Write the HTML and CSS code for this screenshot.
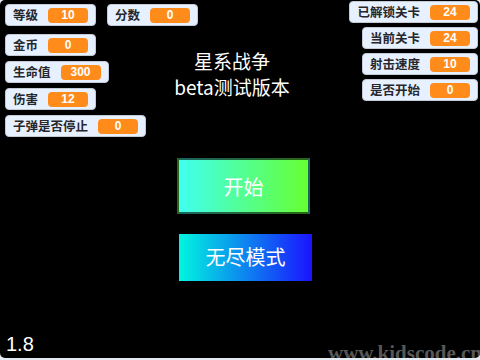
FILE: index.html
```html
<!DOCTYPE html>
<html lang="zh-CN">
<head>
<meta charset="utf-8">
<title>星系战争</title>
<link rel="stylesheet" href="styles.css">
</head>
<body>
<div class="stage">
  <div class="col-left">
    <div class="row-first">
      <div class="monitor"><span class="label">等级</span><span class="value">10</span></div>
      <div class="monitor"><span class="label">分数</span><span class="value">0</span></div>
    </div>
    <div class="stack">
      <div class="monitor"><span class="label">金币</span><span class="value">0</span></div>
      <div class="monitor"><span class="label">生命值</span><span class="value">300</span></div>
      <div class="monitor"><span class="label">伤害</span><span class="value">12</span></div>
      <div class="monitor"><span class="label">子弹是否停止</span><span class="value">0</span></div>
    </div>
    <div class="version">1.8</div>
  </div>
  <div class="col-center">
    <div class="title">星系战争<br>beta测试版本</div>
    <div class="btn btn-start">开始</div>
    <div class="btn btn-endless">无尽模式</div>
  </div>
  <div class="col-right">
    <div class="monitor"><span class="label">已解锁关卡</span><span class="value">24</span></div>
    <div class="monitor"><span class="label">当前关卡</span><span class="value">24</span></div>
    <div class="monitor"><span class="label">射击速度</span><span class="value">10</span></div>
    <div class="monitor"><span class="label">是否开始</span><span class="value">0</span></div>
  </div>
  <div class="watermark">www.kidscode.cn</div>
</div>
</body>
</html>
```
FILE: styles.css
```css
html, body {
  margin: 0;
  padding: 0;
}
body {
  width: 480px;
  height: 360px;
  background: #e4eaf2;
  font-family: "Noto Sans CJK SC", "Noto Sans", sans-serif;
  overflow: hidden;
}
.stage {
  position: relative;
  width: 480px;
  height: 358px;
  background: #000;
  border-radius: 5px;
  overflow: hidden;
  display: flex;
  flex-direction: row;
}
.col-left {
  width: 160px;
  flex: none;
  box-sizing: border-box;
  padding: 4px 0 2px 5px;
  display: flex;
  flex-direction: column;
}
.row-first {
  display: flex;
  gap: 11px;
  margin-bottom: 8px;
}
.stack {
  display: flex;
  flex-direction: column;
  align-items: flex-start;
  gap: 5px;
}
.monitor {
  flex: none;
  height: 22px;
  box-sizing: border-box;
  display: flex;
  align-items: center;
  gap: 10px;
  padding: 0 7px;
  background: #e6f0ff;
  border: 1px solid #c2cad6;
  border-radius: 4px;
  white-space: nowrap;
}
.label {
  font-size: 12.5px;
  font-weight: 700;
  color: #26272b;
  line-height: 1;
}
.value {
  min-width: 40px;
  height: 15px;
  box-sizing: border-box;
  padding: 0 4px;
  background: #ff8c1a;
  border-radius: 4px;
  color: #fff;
  font-family: "Liberation Sans", Arial, sans-serif;
  font-size: 12px;
  font-weight: 700;
  line-height: 15px;
  text-align: center;
}
.version {
  margin-top: auto;
  margin-left: 1px;
  color: #fff;
  font-family: "Liberation Sans", Arial, sans-serif;
  font-size: 20px;
  line-height: 23px;
}
.col-center {
  width: 170px;
  flex: none;
  display: flex;
  flex-direction: column;
  align-items: flex-start;
  padding-top: 48px;
}
.title {
  width: 144px;
  color: #fff;
  font-size: 19px;
  line-height: 26px;
  text-align: center;
}
.btn {
  width: 133px;
  box-sizing: border-box;
  display: flex;
  align-items: center;
  justify-content: center;
  color: #fff;
  font-size: 20px;
}
.btn-start {
  margin-top: 58px;
  margin-left: 17px;
  height: 56px;
  background: linear-gradient(to right, #40fff0, #66ff33);
  border: 2px solid rgba(0, 0, 0, 0.6);
}
.btn-endless {
  margin-top: 20px;
  margin-left: 19px;
  height: 47px;
  padding-bottom: 2px;
  background: linear-gradient(to right, #00f5e0, #1a14ff);
}
.col-right {
  flex: 1;
  box-sizing: border-box;
  padding: 1px 2px 0 0;
  display: flex;
  flex-direction: column;
  align-items: flex-end;
  gap: 4px;
}
.watermark {
  position: absolute;
  left: 328px;
  top: 343px;
  font-family: "Liberation Serif", "Times New Roman", serif;
  font-size: 21px;
  font-weight: 700;
  line-height: 1;
  color: #575757;
  white-space: nowrap;
}
```
